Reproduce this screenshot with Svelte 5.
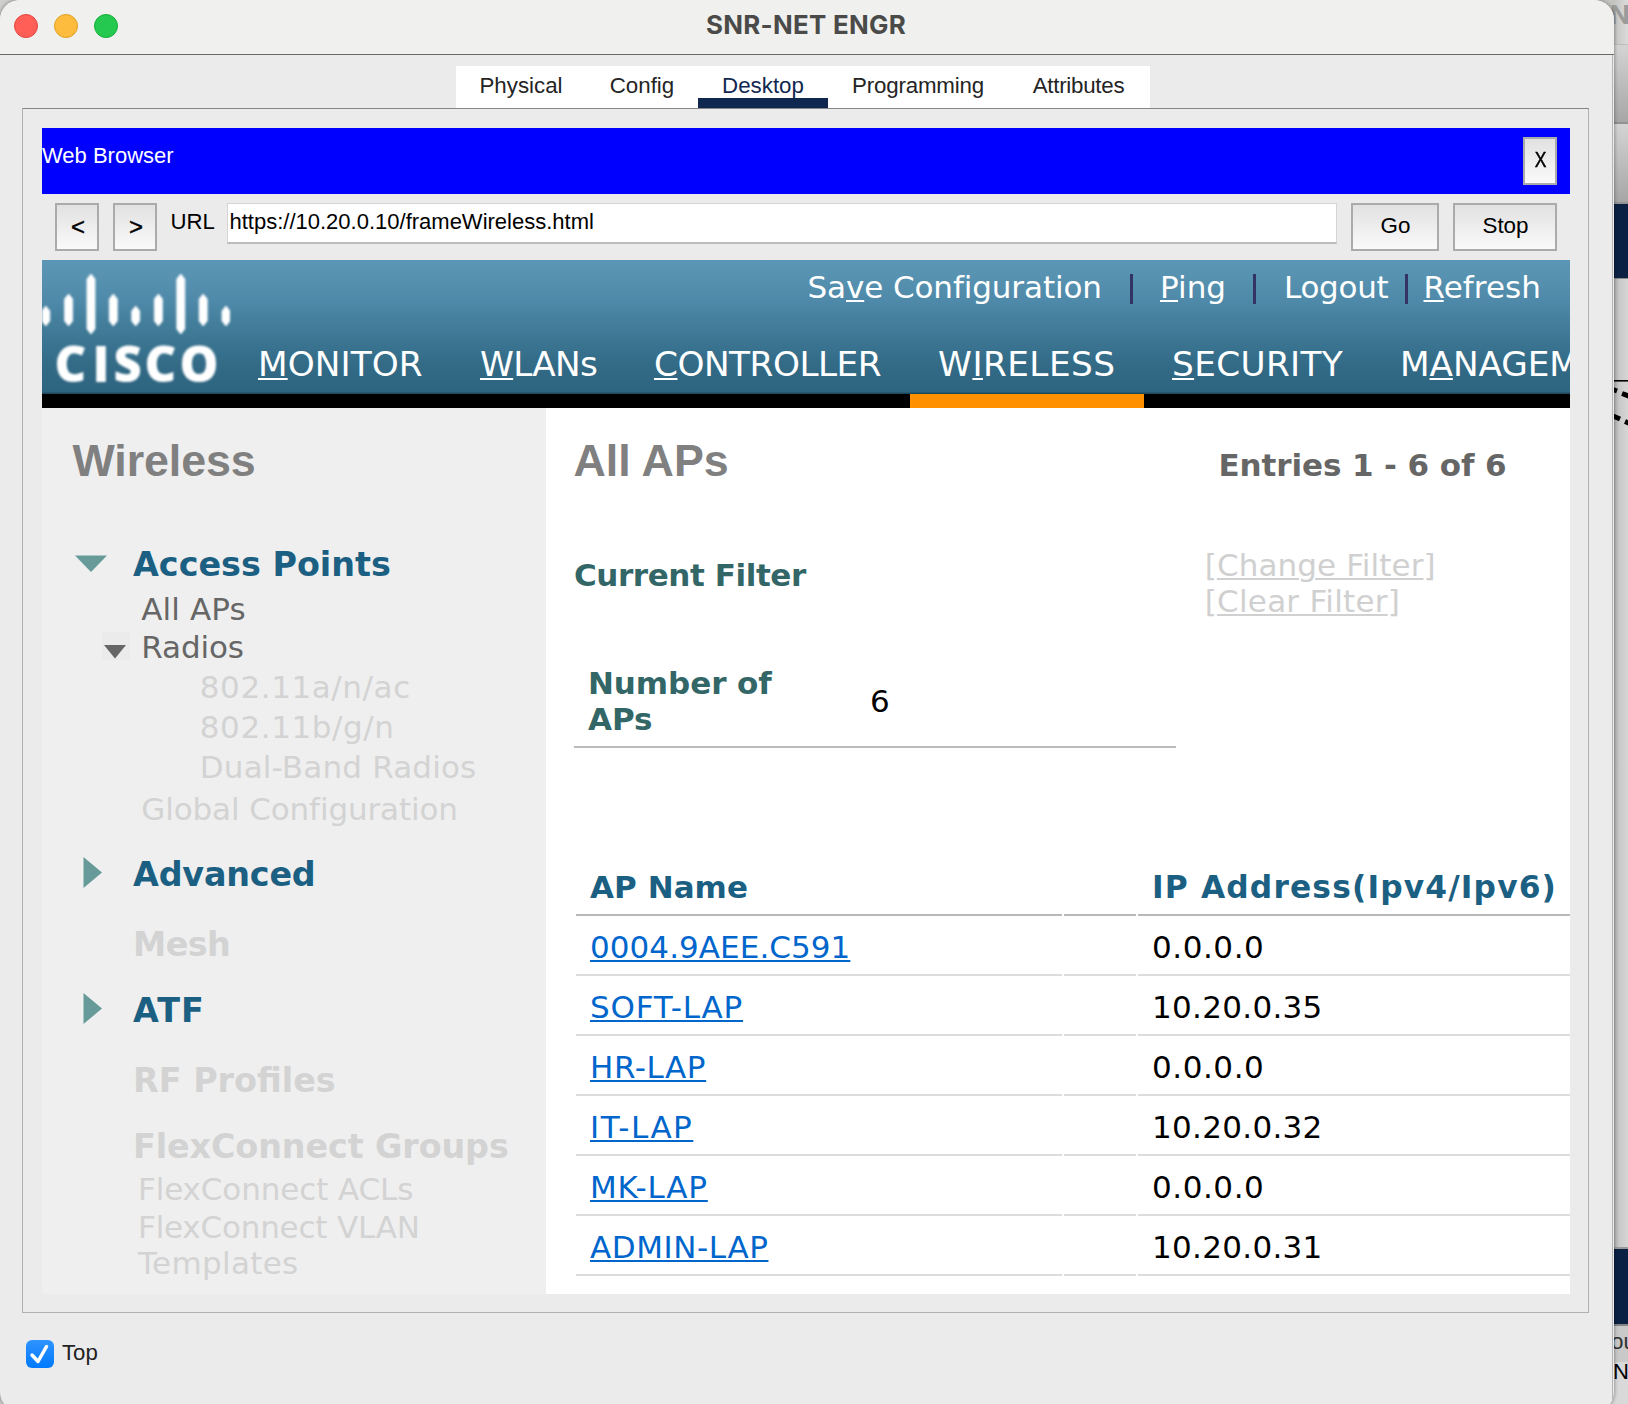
<script>
  const tabs = [
    { name: 'Physical', size: 'w130' },
    { name: 'Config', size: 'w112' },
    { name: 'Desktop', size: 'w130', active: true },
    { name: 'Programming', size: 'w180' },
    { name: 'Attributes', size: 'w142' }
  ];

  // Each entry: text before the access key, the key, text after it.
  const menu = [
    { id: 'monitor', parts: ['', 'M', 'ONITOR'] },
    { id: 'wlans', parts: ['', 'W', 'LANs'] },
    { id: 'controller', parts: ['', 'C', 'ONTROLLER'] },
    { id: 'wireless', parts: ['W', 'I', 'RELESS'], active: true },
    { id: 'security', parts: ['', 'S', 'ECURITY'] },
    { id: 'management', parts: ['M', 'A', 'NAGEMENT'] }
  ];

  const tree = [
    { text: 'Access Points', cls: 'section g32', icon: 'down' },
    { text: 'All APs', cls: 'leaf g7 t1' },
    { text: 'Radios', cls: 'leaf g2 tn1', icon: 'small' },
    { text: '802.11a/n/ac', cls: 'deep off g4 t6' },
    { text: '802.11b/g/n', cls: 'deep off g4 t6' },
    { text: 'Dual-Band Radios', cls: 'deep off g4 t2' },
    { text: 'Global Configuration', cls: 'leaf off g6 tn1' },
    { text: 'Advanced', cls: 'section g28 tn2', icon: 'right' },
    { text: 'Mesh', cls: 'section off g31 tn6' },
    { text: 'ATF', cls: 'section g27 t10', icon: 'right' },
    { text: 'RF Profiles', cls: 'section off g31' },
    { text: 'FlexConnect Groups', cls: 'section off g27 tn1' },
    { text: 'FlexConnect ACLs', cls: 'flex off g5 tn1' },
    { text: 'FlexConnect VLAN', cls: 'flex off g2 tn2' },
    { text: 'Templates', cls: 'flex off t3' }
  ];

  const aps = [
    { name: '0004.9AEE.C591', ip: '0.0.0.0', track: 't0' },
    { name: 'SOFT-LAP', ip: '10.20.0.35', track: 't8' },
    { name: 'HR-LAP', ip: '0.0.0.0', track: 't6' },
    { name: 'IT-LAP', ip: '10.20.0.32', track: 't15' },
    { name: 'MK-LAP', ip: '0.0.0.0', track: 't8' },
    { name: 'ADMIN-LAP', ip: '10.20.0.31', track: 't6' }
  ];

  // Logo bars: centre x, top, bottom.
  const bars = [
    [3.8, 46, 66], [26.6, 34, 66], [49, 14, 74], [71.3, 34, 66], [93.7, 46, 66],
    [116.4, 34, 66], [138.8, 14, 74], [161.2, 34, 66], [184, 46, 66]
  ];
</script>

<div class="desktop">
  <div class="behind">
    <div class="b-title">N</div>
    <div class="b-tool"></div>
    <div class="b-tool second"></div>
    <div class="b-navy"></div>
    <div class="b-canvas">
      <svg width="28" height="60" viewBox="0 0 28 60">
        <path d="M0 11.8H28" stroke="#000" stroke-width="1.6" />
        <path d="M13 20.5L17 22M22 24.5L30 27.5M13 47L20 50M25 52.5L31 55" stroke="#000" stroke-width="5" />
      </svg>
    </div>
    <div class="b-navy low"></div>
    <div class="b-ou">ou</div>
    <div class="b-n">N</div>
  </div>

  <div class="window">
    <header class="titlebar">
      <div class="lights"><i class="red"></i><i class="yellow"></i><i class="green"></i></div>
      <div class="title">SNR-NET ENGR</div>
    </header>

    <div class="body">
      <nav class="tabs">
        {#each tabs as t}
          <div class="tab {t.size}" class:active={t.active}>{t.name}</div>
        {/each}
      </nav>

      <section class="panel">
        <div class="bluebar">
          <span>Web Browser</span>
          <button class="btn close"><span>X</span></button>
        </div>

        <div class="toolbar">
          <button class="btn arrow">&lt;</button>
          <button class="btn arrow">&gt;</button>
          <label for="url">URL</label>
          <input id="url" value="https://10.20.0.10/frameWireless.html" />
          <button class="btn">Go</button>
          <button class="btn">Stop</button>
        </div>

        <div class="banner">
          <svg class="logo" width="188" height="136" viewBox="0 0 188 136">
            {#each bars as [x, top, bottom]}
              <path d="M{x - 4} {top + 5}L{x} {top}L{x + 4} {top + 5}V{bottom - 5}L{x} {bottom}L{x - 4} {bottom - 5}Z" />
            {/each}
            <text y="122" x="12.5 50.500 71.500 102.500 137.500">CISCO</text>
          </svg>
          <div class="bannerright">
            <div class="links">
              <span class="save">Sa<u>v</u>e Configuration</span>
              <i></i>
              <span class="ping"><u>P</u>ing</span>
              <i></i>
              <span class="logout">Logout</span>
              <i></i>
              <span class="refresh"><u>R</u>efresh</span>
            </div>
            <div class="menu">
              {#each menu as m}
                <div class="entry {m.id}" class:active={m.active}>{m.parts[0]}<u>{m.parts[1]}</u>{m.parts[2]}</div>
              {/each}
            </div>
          </div>
        </div>

        <div class="content">
          <aside>
            <h2>Wireless</h2>
            {#each tree as n}
              <div class="node {n.cls}">
                <span class="icon">
                  {#if n.icon === 'down'}
                    <svg class="down" width="32" height="17" viewBox="0 0 32 17"><path d="M0 .5H32L16 17Z" fill="#669b9a" /></svg>
                  {:else if n.icon === 'right'}
                    <svg class="right" width="19" height="31" viewBox="0 0 19 31"><path d="M.5 0L19 15.5L.5 31Z" fill="#669b9a" /></svg>
                  {:else if n.icon === 'small'}
                    <svg class="small" width="28" height="28" viewBox="0 0 28 28"><path d="M2 13H24L13 26.500Z" fill="#666" /></svg>
                  {/if}
                </span>
                <span>{n.text}</span>
              </div>
            {/each}
          </aside>

          <main>
            <div class="head">
              <h2>All APs</h2>
              <div class="entries">Entries 1 - 6 of 6</div>
            </div>
            <div class="filter">
              <div class="current">Current Filter</div>
              <div class="actions">
                <div>[<a href="#change">Change Filter</a>]</div>
                <div class="clear">[<a href="#clear">Clear Filter</a>]</div>
              </div>
            </div>
            <div class="count">
              <div class="label">Number of<br />APs</div>
              <div>6</div>
            </div>
            <div class="table">
              <div class="cell th">AP Name</div>
              <div class="cell th"></div>
              <div class="cell th ip">IP Address(Ipv4/Ipv6)</div>
              {#each aps as ap}
                <div class="cell {ap.track}"><a href="#ap">{ap.name}</a></div>
                <div class="cell"></div>
                <div class="cell ip" class:zero={ap.ip === '0.0.0.0'}>{ap.ip}</div>
              {/each}
            </div>
          </main>
        </div>
      </section>

      <footer>
        <svg width="28" height="28" viewBox="0 0 28 28">
          <defs>
            <linearGradient id="blue" x1="0" y1="0" x2="0" y2="1">
              <stop offset="0" stop-color="#2f93ff" /><stop offset="1" stop-color="#007aff" />
            </linearGradient>
          </defs>
          <rect width="28" height="28" rx="6" fill="url(#blue)" />
          <path d="M6 15L12 21.500L20.500 6.500" fill="none" stroke="#fff" stroke-width="3.500" stroke-linecap="round" stroke-linejoin="round" />
        </svg>
        <span>Top</span>
      </footer>
    </div>
  </div>
</div>

<style>
  :global(body) { margin: 0; overflow: hidden; }
  * { box-sizing: border-box; }
  .desktop {
    position: relative; width: 1628px; height: 1404px; overflow: hidden; background: #cfcfce;
    font-family: "Liberation Sans", Arial, sans-serif; font-size: 22.4px; color: #000;
  }

  /* window partly hidden at the right edge */
  .behind { position: absolute; left: 1600px; top: 0; width: 28px; height: 1404px; display: flex; flex-direction: column; overflow: hidden; }
  .behind > div { flex: none; white-space: nowrap; }
  .b-title { height: 45px; background: linear-gradient(90deg, #c4c4c3 50%, #dbdbda); border-bottom: 1px solid #bdbdbd; font: 700 26px/30px Inter, sans-serif; color: #9b9b9a; padding-left: 10px; }
  .b-tool { height: 79px; background: linear-gradient(#d4d4d4, #a6a6a6); border-bottom: 2px solid #939393; }
  .b-tool.second { height: 80px; }
  .b-navy { height: 74px; background: #0b2143; }
  .b-canvas { height: 971px; padding-top: 90px; background: linear-gradient(90deg, #b4b4b4 50%, #c9c9c9 70%, #d6d6d6); border-top: 1px solid #8a8a8a; border-bottom: 2px solid #999; }
  .b-canvas svg { display: block; margin-top: 0; }
  .b-navy.low { height: 75px; }
  .b-ou { height: 38px; border-top: 2px solid #858585; background: #c9c9c9; color: #333; line-height: 31px; padding-left: 11px; }
  .b-n { height: 42px; background: #d9d9d9; padding-left: 13px; font-size: 22px; line-height: 20px; }

  .window { position: relative; width: 1614px; height: 1412px; border-radius: 20px; overflow: hidden; background: #ebebeb; box-shadow: 0 0 4px rgba(0, 0, 0, .45); }
  .titlebar { position: relative; height: 55px; background: #f0f0ee; border-bottom: 1px solid #686868; }
  .lights { position: absolute; left: 14px; top: 14px; display: flex; gap: 16px; }
  .lights i { width: 24px; height: 24px; border-radius: 50%; }
  .red { background: #ff5f57; border: 1px solid #e2463f; }
  .yellow { background: #febc3f; border: 1px solid #dfa023; }
  .green { background: #25c94f; border: 1px solid #14ae38; }
  .title { text-align: center; font: 700 25.9px/49px Inter, sans-serif; letter-spacing: .29px; color: #4a4a49; padding-right: 2px; }

  .body { height: 1357px; padding-top: 11px; border-right: 1px solid #b5b5b5; width: 1613px; }
  .tabs { display: flex; width: 694px; height: 42px; margin-left: 456px; background: #fff; color: #242424; }
  .tab { height: 42px; line-height: 39px; text-align: center; font-size: 22.3px; }
  .w112 { width: 112px; } .w130 { width: 130px; } .w142 { width: 142px; letter-spacing: -.25px; padding-right: 1px; } .w180 { width: 180px; letter-spacing: -.15px; }
  .tab.active { color: #10284f; background: linear-gradient(#fff 32px, #10284f 32px); }

  .panel { width: 1567px; height: 1205px; margin-left: 22px; padding: 19px 18px 0 19px; border: 1px solid #b0b0b0; border-top-color: #868686; }
  .bluebar { display: flex; justify-content: space-between; width: 1528px; height: 66px; padding-right: 13px; background: #00f; color: #fff; font-size: 22px; line-height: 55px; }
  .btn { display: flex; justify-content: center; align-items: flex-start; height: 48px; padding: 0 0 0 1px; border: 2px solid #ababab; border-radius: 0; background: linear-gradient(#e1e1e1, #fafafa); font: 22.4px/41px "Liberation Sans", Arial, sans-serif; color: #000; }
  .close { width: 34px; margin-top: 9px; }
  .close span { display: inline-block; transform: scaleX(.78); -webkit-text-stroke: .5px #000; }
  .arrow { font-size: 24px; line-height: 44px; padding-left: 2px; -webkit-text-stroke: .4px #000; }
  .toolbar { display: grid; grid-template-columns: 44px 44px 42px 1110px 88px 104px; column-gap: 14px; align-items: start; width: 1528px; height: 66px; padding: 9px 13px 0; }
  label { line-height: 37px; font-size: 22.2px; margin-left: -.5px; }
  input { height: 41px; width: 1110px; margin: 0; padding: 0 0 3px 1.500px; border: 1px solid #d5d5d5; border-bottom: 2px solid #bcbcbc; background: #fff; font: 22px "Liberation Sans", Arial, sans-serif; color: #000; border-radius: 0; }

  .banner { display: flex; width: 1528px; height: 148px; overflow: hidden; color: #fff; background: linear-gradient(#5b96b6 0, #5792b1 16px, #4e88a8 44px, #45809e 58px, #39738f 86px, #316884 112px, #2d6480 132px, #1d4a5e 133px, #1d4a5e 134px, #000 134px); }
  .logo { flex: none; fill: #fff; filter: blur(.8px); }
  .logo path { stroke: #fff; stroke-width: .8; }
  .logo text { font: 800 49px "Open Sans", sans-serif; }
  .bannerright { width: 1340px; font-family: "DejaVu Sans", Verdana, sans-serif; }
  .links { display: grid; grid-template-columns: 322.5px 30px 93px 31px 121px 18.5px 140px; height: 54px; margin-left: 577.5px; font-size: 31px; line-height: 54px; white-space: nowrap; }
  .links i { width: 3px; height: 30px; margin-top: 14px; background: #333366; }
  u { text-decoration: underline 2px; text-underline-offset: 2px; text-decoration-skip-ink: none; }
  .save { letter-spacing: -.1px; } .ping { letter-spacing: 0; } .logout { letter-spacing: -.3px; } .refresh { letter-spacing: .05px; }
  .menu { display: flex; }
  .entry { flex: none; height: 94px; padding: 20px 0 0 28px; border-bottom: 14px solid transparent; font-size: 34.3px; line-height: 60px; white-space: nowrap; }
  .entry.active { border-bottom-color: #ff9000; }
  .monitor { width: 222px; letter-spacing: .08px; }
  .wlans { width: 174px; letter-spacing: -.75px; }
  .controller { width: 284px; letter-spacing: -.5px; }
  .wireless { width: 234px; letter-spacing: .45px; }
  .security { width: 228px; letter-spacing: .35px; }
  .management { width: 260px; letter-spacing: -.1px; }

  .content { display: flex; width: 1528px; height: 886px; font-family: "DejaVu Sans", Verdana, sans-serif; font-size: 31px; line-height: 36px; }
  h2 { margin: 0; font: 700 44.8px/105px "Liberation Sans", Arial, sans-serif; color: #808080; }
  aside { width: 504px; background: #efefef; color: #666; }
  aside h2 { padding-left: 30.5px; letter-spacing: -.1px; }
  .node { display: flex; height: 36px; white-space: nowrap; }
  .icon { flex: none; }
  .icon svg { display: block; filter: blur(.5px); }
  .section { height: 39px; font-size: 33.4px; line-height: 39px; font-weight: 700; color: #1b5f82; }
  .section .icon { width: 91px; }
  .leaf .icon { width: 99.3px; }
  .deep .icon { width: 157.800px; }
  .flex .icon { width: 96px; }
  .node.off { color: #d3d3d3; }
  svg.down { margin: 10px 0 0 32.5px; }
  svg.right { margin: 2px 0 0 40.5px; }
  svg.small { margin: 3px 0 0 59.500px; background: #ebebeb; }
  .g2 { margin-top: 2px; } .g4 { margin-top: 4px; } .g5 { margin-top: 5px; } .g6 { margin-top: 6px; } .g7 { margin-top: 7px; }
  .g27 { margin-top: 27px; } .g28 { margin-top: 28px; } .g31 { margin-top: 31px; } .g32 { margin-top: 32px; }
  .tn6 { letter-spacing: -.6px; } .tn2 { letter-spacing: -.2px; } .tn1 { letter-spacing: -.12px; }
  .t1 { letter-spacing: .1px; } .t2 { letter-spacing: .17px; } .t3 { letter-spacing: .33px; }

  main { width: 1024px; background: #fff; }
  .head { display: grid; grid-template-columns: 645px 1fr; padding-left: 27.5px; height: 105px; }
  .entries { margin-top: 4px; line-height: 106px; font-weight: 700; letter-spacing: -.1px; color: #666; }
  .filter { display: flex; height: 106px; padding: 34px 0 0 28px; }
  .current { width: 630.7px; padding-top: 10px; font-weight: 700; letter-spacing: -.42px; color: #336666; }
  .actions { color: #d0d0d0; letter-spacing: .1px; }
  .clear { letter-spacing: .25px; }
  a { text-decoration: underline 2px; text-underline-offset: 2px; }
  .actions a { color: inherit; }
  .count { display: flex; align-items: center; width: 602px; height: 83px; margin: 46px 0 0 28px; padding: 0 0 9px 14px; border-bottom: 2px solid #bbb; }
  .label { width: 282px; font-weight: 700; letter-spacing: -.08px; color: #336666; }
  .table { display: grid; grid-template-columns: 486px 72px 432px; column-gap: 2px; margin: 108px 0 0 30px; }
  .cell { height: 60px; padding: 4px 0 0 14px; border-bottom: 2px solid #dcdcdc; line-height: 54px; white-space: nowrap; }
  .cell a { color: #0066cc; }
  .cell.ip { padding-left: 14px; letter-spacing: .3px; }
  .cell.ip.zero { letter-spacing: .55px; }
  .cell.th { font-weight: 700; color: #1b5f82; border-bottom-color: #b8b8b8; letter-spacing: .05px; }
  .cell.th.ip { padding-left: 14px; font-size: 31.3px; letter-spacing: 1.15px; }
  .t0 { letter-spacing: .06px; } .t6 { letter-spacing: .58px; } .t8 { letter-spacing: .82px; } .t10 { letter-spacing: 1px; } .t15 { letter-spacing: 1.5px; }

  footer { display: flex; gap: 8px; margin: 27px 0 0 26px; font-size: 22.2px; line-height: 25px; color: #222; }
</style>
